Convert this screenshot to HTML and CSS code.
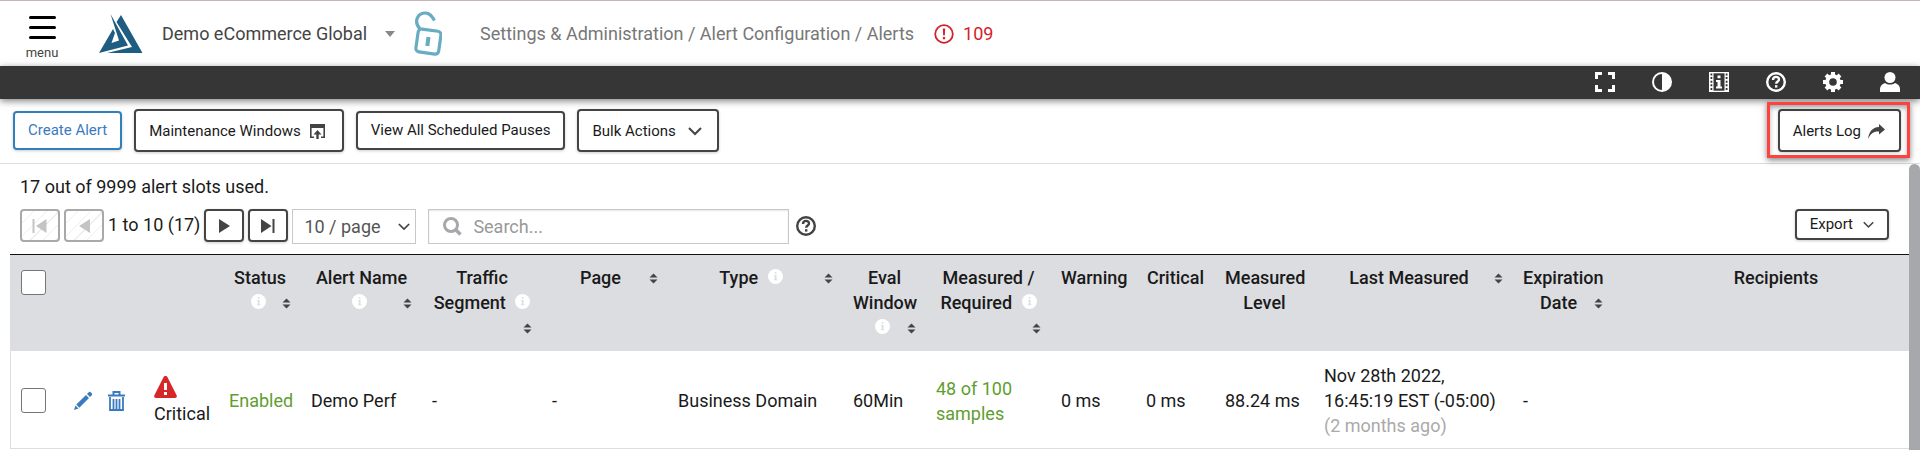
FILE: index.html
```html
<!DOCTYPE html>
<html lang="en">
  <head>
    <title>Alerts</title>
    <meta charset="utf-8" />
    <link rel="stylesheet" href="styles.css">
  </head>
  <body>
    <!-- shared icons -->
    <svg class="sprite" aria-hidden="true">
      <symbol id="info" viewBox="0 0 15 15">
        <circle cx="7.5" cy="7.5" r="7.5" fill="#fff" />
        <path d="M6.7 3.2h1.8v1.6H6.7zM6 6h2.5v4.3h.8v1H6v-1h.8V7H6z" fill="#dcdde1" />
      </symbol>
      <symbol id="sort" viewBox="0 0 9 11">
        <path d="M4.5 .5L8.500 4.500h-8zM4.500 10.500L.5 6.500h8z" fill="#444" />
      </symbol>
      <symbol id="chevron" viewBox="0 0 14 9">
        <path d="M1 1l6 6 6-6" fill="none" stroke="#444" stroke-width="2" />
      </symbol>
      <symbol id="help" viewBox="0 0 20 20">
        <circle cx="10" cy="10" r="8.8" fill="none" stroke="currentColor" stroke-width="2.4" />
        <path d="M7 8c0-4 6-4 6-.6 0 2.200-2.800 2-2.800 4.400" fill="none" stroke="currentColor" stroke-width="2.4" />
        <path d="M9 13.200h2.400v2.400H9z" fill="currentColor" />
      </symbol>
    </svg>

    <header class="top">
      <button class="menu-btn">
        <svg width="27" height="24" viewBox="0 0 27 24"><path d="M1.500 1.500h24M1.500 11.500h24M1.500 21.500h24" stroke="#000" stroke-width="3" stroke-linecap="round" /></svg>
        <span>menu</span>
      </button>
      <svg class="logo" width="44" height="40" viewBox="0 0 44 40" fill="#1f5c82">
        <path d="M11.500 0L29 31.500 0 39l14-24 2 4-3.500 10 7.500-2.500z" />
        <path d="M22 1l21.500 38H8l25-6L17.500 8z" />
      </svg>
      <button class="account">Demo eCommerce Global <i class="caret"></i></button>
      <svg class="lock" width="28" height="45" viewBox="0 0 28 45" fill="none" stroke="#68acc2" stroke-width="3.2">
        <path d="M6 18C-1 10 4 2 11.500 2c4 0 6 2.500 9 7.500" />
        <rect x="3" y="19" width="23" height="23" rx="3.5" transform="rotate(8 14 30)" />
        <path d="M14.500 26l-1.200 9" stroke-width="4" />
      </svg>
      <nav class="crumbs">Settings &amp; Administration / Alert Configuration / Alerts</nav>
      <a class="alert-count" href="#">
        <svg width="20" height="20" viewBox="0 0 20 20"><circle cx="10" cy="10" r="8.800" fill="none" stroke="#d3222a" stroke-width="1.800" /><path d="M8.800 4.500h2.400l-.4 7H9.200zM8.900 13h2.200v2.200H8.900z" fill="#d3222a" /></svg>
        109
      </a>
    </header>

    <div class="dark-bar">
      <button aria-label="Full screen">
        <svg width="20" height="20" viewBox="0 0 20 20"><path d="M1.500 7V1.500H7M13 1.500h5.500V7M18.500 13v5.500H13M7 18.500H1.500V13" fill="none" stroke="#fff" stroke-width="3" /></svg>
      </button>
      <button aria-label="Contrast">
        <svg width="20" height="20" viewBox="0 0 20 20"><circle cx="10" cy="10" r="9" fill="none" stroke="#fff" stroke-width="2" /><path d="M10 1a9 9 0 0 1 0 18z" fill="#fff" /></svg>
      </button>
      <button aria-label="Information">
        <svg width="20" height="20" viewBox="0 0 20 20"><path d="M0 0h20v20H0z" fill="#fff" /><path d="M4.500 1.300h11v17.400h-11z" fill="#363636" /><path d="M2.400 1.500v18M17.600 1.500v18" stroke="#363636" stroke-width="1.800" stroke-dasharray="2 1.600" /><path d="M8.500 3.500h3v2.700h-3zM7 8h4.500v6.500H13v2H7v-2h1.500V10H7z" fill="#fff" /></svg>
      </button>
      <button aria-label="Help"><svg width="20" height="20"><use href="#help" /></svg></button>
      <button aria-label="Settings">
        <svg width="20" height="20" viewBox="0 0 20 20"><circle cx="10" cy="10" r="5.800" fill="none" stroke="#fff" stroke-width="4" /><path d="M10 0v4M10 16v4M0 10h4M16 10h4M3 3l3 3M14 14l3 3M17 3l-3 3M6 14l-3 3" stroke="#fff" stroke-width="4" /></svg>
      </button>
      <button aria-label="Profile">
        <svg width="20" height="20" viewBox="0 0 20 20" fill="#fff"><circle cx="10" cy="5.500" r="5.500" /><path d="M0 20v-3c0-3 2-5 5-6 3 2 7 2 10 0 3 1 5 3 5 6v3z" /></svg>
      </button>
    </div>

    <div class="toolbar">
      <button class="btn primary">Create Alert</button>
      <button class="btn tall">Maintenance Windows
        <svg width="15" height="15" viewBox="0 0 15 15"><path d="M.8 3v10.200H4M14.200 3v10.200H11" fill="none" stroke="#444" stroke-width="1.600" /><path d="M0 0h15v4H0zM7.500 6l4 4.500H8.700V15H6.300v-4.500H3.500z" fill="#444" /></svg>
      </button>
      <button class="btn">View All Scheduled Pauses</button>
      <button class="btn tall bulk">Bulk Actions <svg width="14" height="9"><use href="#chevron" /></svg></button>
      <div class="log-wrap">
        <button class="btn tall log">Alerts Log
          <svg width="17" height="15" viewBox="0 0 17 15"><path d="M11 0l6 5.500-6 5V7.500C6 7 3 9 0 15 1 8 4 3.500 11 3z" fill="#444" /></svg>
        </button>
        <div class="highlight"></div>
      </div>
    </div>

    <div class="content">
      <main>
        <p class="slots">17 out of 9999 alert slots used.</p>
        <div class="pager">
          <button class="page-btn" aria-label="First" disabled><svg width="16" height="14" viewBox="0 0 16 14"><path d="M14.500 0v14L4 7zM.5 0h2v14h-2z" fill="currentColor" /></svg></button>
          <button class="page-btn" aria-label="Previous" disabled><svg width="11" height="14" viewBox="0 0 11 14"><path d="M11 0v14L0 7z" fill="currentColor" /></svg></button>
          <span class="range">1 to 10 (17)</span>
          <button class="page-btn" aria-label="Next"><svg width="11" height="14" viewBox="0 0 11 14"><path d="M0 0v14l11-7z" fill="currentColor" /></svg></button>
          <button class="page-btn" aria-label="Last"><svg width="16" height="14" viewBox="0 0 16 14"><path d="M1 0v14l10.500-7zM12.500 0h2v14h-2z" fill="currentColor" /></svg></button>
          <div class="select-wrap">
            <select aria-label="Rows per page"><option>10 / page</option></select>
            <svg width="12" height="8"><use href="#chevron" /></svg>
          </div>
          <label class="search">
            <svg width="19" height="19" viewBox="0 0 19 19"><circle cx="8" cy="8" r="6.500" fill="none" stroke="#a7a8ac" stroke-width="3" /><path d="M12.500 12.500l5 5" stroke="#a7a8ac" stroke-width="3.500" /></svg>
            <input type="text" placeholder="Search..." aria-label="Search">
          </label>
          <button class="help-btn" aria-label="Search help"><svg width="20" height="20"><use href="#help" /></svg></button>
          <button class="btn export">Export <svg width="11" height="8"><use href="#chevron" /></svg></button>
        </div>

        <table>
          <colgroup>
            <col class="c-check"><col class="c-edit"><col class="c-level"><col class="c-status"><col class="c-name"><col class="c-segment"><col class="c-page"><col class="c-type"><col class="c-eval"><col class="c-samples"><col class="c-warn"><col class="c-crit"><col class="c-measured"><col class="c-last"><col class="c-exp"><col>
          </colgroup>
          <thead>
            <tr>
              <th><input type="checkbox" aria-label="Select all"></th>
              <th></th>
              <th></th>
              <th>Status <svg class="info"><use href="#info" /></svg><button class="sort" aria-label="Sort"><svg width="9" height="11"><use href="#sort" /></svg></button></th>
              <th>Alert Name <svg class="info"><use href="#info" /></svg><button class="sort" aria-label="Sort"><svg width="9" height="11"><use href="#sort" /></svg></button></th>
              <th>Traffic Segment <svg class="info"><use href="#info" /></svg><button class="sort" aria-label="Sort"><svg width="9" height="11"><use href="#sort" /></svg></button></th>
              <th>Page <button class="sort" aria-label="Sort"><svg width="9" height="11"><use href="#sort" /></svg></button></th>
              <th>Type <svg class="info"><use href="#info" /></svg><button class="sort" aria-label="Sort"><svg width="9" height="11"><use href="#sort" /></svg></button></th>
              <th>Eval Window <svg class="info"><use href="#info" /></svg><button class="sort" aria-label="Sort"><svg width="9" height="11"><use href="#sort" /></svg></button></th>
              <th>Measured / Required <svg class="info"><use href="#info" /></svg><button class="sort" aria-label="Sort"><svg width="9" height="11"><use href="#sort" /></svg></button></th>
              <th>Warning</th>
              <th>Critical</th>
              <th>Measured Level</th>
              <th>Last Measured <button class="sort" aria-label="Sort"><svg width="9" height="11"><use href="#sort" /></svg></button></th>
              <th>Expiration Date <button class="sort" aria-label="Sort"><svg width="9" height="11"><use href="#sort" /></svg></button></th>
              <th class="recipients">Recipients</th>
            </tr>
          </thead>
          <tbody>
            <tr>
              <td><input type="checkbox" aria-label="Select Demo Perf"></td>
              <td>
                <div class="actions">
                  <button aria-label="Edit"><svg width="19" height="19" viewBox="0 0 19 19" fill="#3a7abf"><path d="M0 19l1.500-4.500 3 3zM2.300 13.500L12 4l3 3-9.700 9.700zM13 3l2-2c1-1 4 2 3 3l-2 2z" /></svg></button>
                  <button aria-label="Delete"><svg width="17" height="20" viewBox="0 0 17 20" fill="none" stroke="#3a7abf"><path d="M0 4.500h17M5.500 4V1h6v3" stroke-width="2" /><path d="M2 6v13h13V6M5.500 8v10M8.500 8v10M11.500 8v10" stroke-width="1.800" /></svg></button>
                </div>
              </td>
              <td>
                <div class="level">
                  <svg width="23" height="22" viewBox="0 0 23 22"><path d="M11.500 0c1 0 1.600.5 2 1.300L22.500 19c.8 1.600.2 3-1.500 3H2C.3 22-.3 20.600.5 19L9.500 1.300C9.900.5 10.500 0 11.500 0z" fill="#d62828" /><path d="M10 7h3v7h-3zM10 16h3v3h-3z" fill="#fff" /></svg>
                  Critical
                </div>
              </td>
              <td class="green">Enabled</td>
              <td>Demo Perf</td>
              <td>-</td>
              <td>-</td>
              <td>Business Domain</td>
              <td>60Min</td>
              <td class="green">48 of 100 samples</td>
              <td>0 ms</td>
              <td>0 ms</td>
              <td>88.24 ms</td>
              <td>Nov 28th 2022, 16:45:19 EST (-05:00) <span class="ago">(2 months ago)</span></td>
              <td>-</td>
              <td></td>
            </tr>
          </tbody>
        </table>
      </main>
      <div class="scroll-thumb"></div>
    </div>
  </body>
</html>
```
FILE: styles.css
```css
* {
  box-sizing: border-box;
}
body {
  margin: 0;
  min-height: 100vh;
  display: flex;
  flex-direction: column;
  background: #fff;
  color: #1a1a1a;
  font-family: Roboto, "Liberation Sans", sans-serif;
  font-size: 18px;
  line-height: 25px;
}
svg {
  display: block;
  flex-shrink: 0;
}
.sprite {
  position: absolute;
  width: 0;
  height: 0;
}
button {
  padding: 0;
  border: none;
  background: none;
  color: inherit;
  font: inherit;
  cursor: pointer;
}

/* Header */
.top {
  display: flex;
  align-items: center;
  height: 66px;
  padding-left: 26px;
  border-top: 1px solid #cbb4bc;
}
.menu-btn {
  display: flex;
  flex-direction: column;
  align-items: center;
  gap: 4px;
  width: 32px;
  padding-top: 10px;
  font-size: 13px;
  line-height: 18px;
  color: #444;
}
.logo {
  margin-left: 41px;
}
.account {
  display: flex;
  align-items: center;
  gap: 18px;
  margin-left: 19px;
  color: #444;
}
.caret {
  border: 5px solid transparent;
  border-top: 6px solid #888;
  border-bottom: none;
}
.lock {
  margin-left: 19px;
}
.crumbs {
  margin-left: 38px;
  color: #777;
}
.alert-count {
  display: flex;
  align-items: center;
  gap: 9px;
  margin-left: 20px;
  color: #d3222a;
  text-decoration: none;
}

.dark-bar {
  display: flex;
  justify-content: flex-end;
  align-items: center;
  gap: 37px;
  height: 33px;
  padding: 0 20px 2px 0;
  background: #363636;
  color: #fff;
  box-shadow: 0 2px 7px rgba(0, 0, 0, 0.5);
}

/* Action buttons */
.toolbar {
  display: flex;
  align-items: center;
  gap: 12px;
  height: 65px;
  padding: 0 19px 2px 13px;
  border-bottom: 1px solid #dcdde1;
}
.btn {
  display: flex;
  align-items: center;
  height: 39px;
  padding: 0 13px;
  border: 2px solid #444;
  border-radius: 4px;
  background: #fff;
  color: #1a1a1a;
  font-size: 15px;
  white-space: nowrap;
  box-shadow: 0 1px 3px rgba(0, 0, 0, 0.2);
}
.btn.tall {
  height: 43px;
  gap: 9px;
  padding: 2px 17px 0 13px;
}
.btn.bulk {
  gap: 12px;
  padding-right: 15px;
}
.btn.log {
  gap: 7px;
  padding-right: 14px;
}
.btn.primary {
  border-color: #2f80bd;
  color: #3a7abf;
}
.log-wrap {
  position: relative;
  margin-left: auto;
}
.highlight {
  position: absolute;
  inset: -7px -9px -6px -11px;
  border: 3px solid #fd4340;
  box-shadow: 0 2px 6px rgba(0, 0, 0, 0.5), inset 0 3px 5px rgba(0, 0, 0, 0.3);
  pointer-events: none;
}

/* List */
.content {
  flex: 1;
  display: flex;
}
main {
  flex: 1;
  min-width: 0;
  padding: 10px 0 0 10px;
}
.scroll-thumb {
  width: 11px;
  border-radius: 6px 6px 0 0;
  background: #a7a8ac;
}
.slots {
  margin: 0 0 10px 10px;
}
.pager {
  display: flex;
  align-items: flex-start;
  gap: 4px;
  height: 45px;
  padding: 0 20px 0 10px;
}
.page-btn {
  display: flex;
  align-items: center;
  justify-content: center;
  width: 40px;
  height: 33px;
  border: 2px solid #444;
  border-radius: 4px;
  color: #444;
  box-shadow: 0 1px 3px rgba(0, 0, 0, 0.2);
}
.page-btn:disabled {
  border-color: #a9a9a9;
  color: #c4c4c4;
  background: repeating-linear-gradient(135deg, #fff 0 8px, #eee 8px 9px);
  box-shadow: none;
  cursor: default;
}
.range {
  padding-top: 3px;
}
.select-wrap {
  position: relative;
  width: 124px;
  margin-right: 8px;
}
.select-wrap svg {
  position: absolute;
  right: 6px;
  top: 14px;
  pointer-events: none;
}
select {
  appearance: none;
  width: 100%;
  height: 35px;
  padding: 0 11px;
  border: 1px solid #c8c8c8;
  border-radius: 0;
  background: #fff;
  color: #555;
  font: inherit;
}
.search {
  display: flex;
  align-items: center;
  gap: 11px;
  width: 361px;
  height: 35px;
  padding: 0 14px;
  border: 1px solid #c8c8c8;
  box-shadow: inset 0 1px 2px rgba(0, 0, 0, 0.1);
}
.search input {
  flex: 1;
  min-width: 0;
  padding: 0;
  border: none;
  outline: none;
  background: none;
  font: inherit;
}
.search input::placeholder {
  color: #999;
}
.help-btn {
  padding: 7px 3px;
  color: #444;
}
.export {
  height: 31px;
  gap: 10px;
  margin-left: auto;
}

/* Table */
table {
  width: 100%;
  table-layout: fixed;
  border-collapse: separate;
  border-spacing: 0;
}
.c-check { width: 54px; }
.c-edit { width: 80px; }
.c-level { width: 75px; }
.c-status { width: 82px; }
.c-name { width: 121px; }
.c-segment { width: 120px; }
.c-page { width: 126px; }
.c-type { width: 175px; }
.c-eval { width: 83px; }
.c-samples { width: 125px; }
.c-warn { width: 85px; }
.c-crit { width: 79px; }
.c-measured { width: 99px; }
.c-last { width: 199px; }
.c-exp { width: 100px; }
th,
td {
  padding: 10px;
}
th {
  height: 97px;
  border-top: 1px solid #111;
  background: #dcdde1;
  font-weight: 500;
  vertical-align: top;
}
td {
  padding-top: 12px;
  border-bottom: 1px solid #dcdde1;
  text-align: left;
}
td:first-child {
  border-left: 1px solid #dcdde1;
}
th.recipients {
  padding-left: 40px;
}
.info {
  display: inline-block;
  width: 15px;
  height: 15px;
  margin-left: 5px;
}
.sort {
  float: right;
  height: 25px;
  padding-top: 2px;
}
input[type="checkbox"] {
  appearance: none;
  display: block;
  width: 25px;
  height: 25px;
  margin: 0 0 0 1px;
  border: 1px solid #767676;
  border-radius: 3px;
  background: #fff;
}
th input[type="checkbox"] {
  margin-top: 5px;
}
td input[type="checkbox"] {
  margin-left: 0;
}
.actions {
  display: flex;
  align-items: center;
  gap: 15px;
}
.level {
  display: flex;
  flex-direction: column;
  gap: 3px;
}
.green {
  color: #5f9e2f;
}
.ago {
  color: #aaa;
}
```
